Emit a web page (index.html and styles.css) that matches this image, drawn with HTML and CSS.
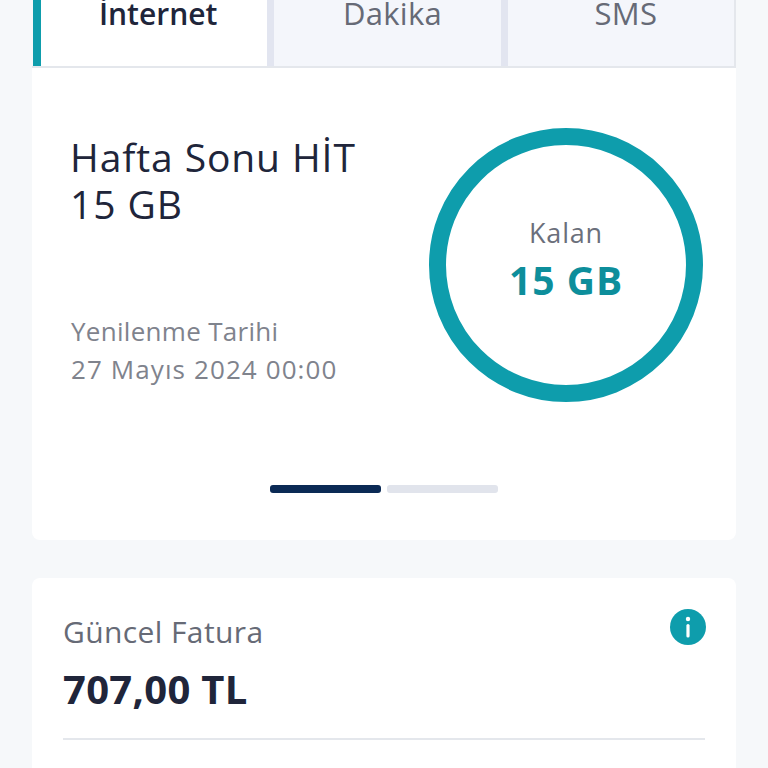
FILE: index.html
```html
<!DOCTYPE html>
<html lang="tr">
<head>
<meta charset="utf-8">
<title>Kalan Kullanım</title>
<link rel="stylesheet" href="styles.css">
</head>
<body>
	<div class="tabs">
		<div class="tab tab-active">İnternet</div>
		<div class="tab">Dakika</div>
		<div class="tab tab-last">SMS</div>
	</div>

	<div class="card usage">
		<div class="usage-row">
			<div class="usage-info">
				<div class="usage-title">Hafta Sonu HİT<br>15 GB</div>
				<div class="usage-date">
					<div class="date-label">Yenilenme Tarihi</div>
					<div class="date-value">27 Mayıs 2024 00:00</div>
				</div>
			</div>
			<div class="ring">
				<div class="ring-label">Kalan</div>
				<div class="ring-value">15 GB</div>
			</div>
		</div>
		<div class="pager">
			<span class="pager-bar pager-on"></span>
			<span class="pager-bar"></span>
		</div>
	</div>

	<div class="card bill">
		<div class="bill-head">
			<div>
				<div class="bill-label">Güncel Fatura</div>
				<div class="bill-amount">707,00 TL</div>
			</div>
			<svg class="info" viewBox="0 0 36 36" width="36" height="36">
				<circle cx="18" cy="18" r="18" fill="#0e9dac"/>
				<circle cx="18" cy="10" r="2.2" fill="#fff"/>
				<rect x="16.4" y="15" width="3.2" height="13.5" rx="1.6" fill="#fff"/>
			</svg>
		</div>
		<div class="bill-line"></div>
	</div>
</body>
</html>
```

FILE: styles.css
```css
html, body {
	height: 768px;
	overflow: hidden;
}

body {
	margin: 0;
	padding: 0 32px;
	background: #f6f8fa;
	color: #20253a;
	font-family: "Open Sans", "Lato", sans-serif;
}

/* tabs run off the top of the screen */
.tabs {
	display: flex;
	height: 86px;
	margin-top: -20px;
	border-bottom: 2px solid #e4e7ec;
	border-right: 2px solid #e4e7ec;
}

.tab {
	flex: 1;
	padding-top: 13px;
	background: #f4f6fb;
	border-right: 7px solid #e2e5f0;
	color: #666a76;
	font-size: 31px;
	letter-spacing: 0.3px;
	line-height: 40px;
	text-align: center;
	text-indent: 10px;
}

.tab-active {
	padding-top: 14px;
	background: #fff;
	border-left: 8px solid #0e9dac;
	margin-left: 1px;
	color: #20253a;
	font-size: 30px;
	font-weight: 600;
	letter-spacing: 0;
	text-indent: 8px;
}

.tab-last {
	border-right: 0;
}

.card {
	background: #fff;
}

.usage {
	height: 472px;
	border-radius: 0 0 8px 8px;
}

.usage-row {
	display: flex;
	justify-content: space-between;
	padding: 60px 33px 0 39px;
}

.usage-info {
	padding-top: 5px;
}

.usage-title {
	margin-left: -1px;
	font-size: 39px;
	font-weight: 500;
	letter-spacing: 0.9px;
	line-height: 47px;
}

.usage-date {
	margin-top: 85px;
	color: #7f838d;
	font-size: 26px;
	line-height: 38px;
}

.date-label {
	letter-spacing: 0.3px;
}

.date-value {
	letter-spacing: 1.1px;
}

.ring {
	box-sizing: border-box;
	display: flex;
	flex-direction: column;
	align-items: center;
	justify-content: center;
	width: 274px;
	height: 274px;
	padding-bottom: 12px;
	border: 17px solid #0e9dac;
	border-radius: 50%;
}

.ring-label {
	color: #6b6f7b;
	font-size: 27px;
	letter-spacing: 0.8px;
	line-height: 40px;
}

.ring-value {
	margin-top: 2px;
	color: #0d8e9b;
	font-size: 39px;
	font-weight: 700;
	letter-spacing: 1px;
	line-height: 50px;
}

.pager {
	display: flex;
	justify-content: center;
	gap: 6px;
	margin-top: 83px;
}

.pager-bar {
	width: 111px;
	height: 8px;
	border-radius: 3px;
	background: #e1e4ec;
}

.pager-on {
	background: #0b2a55;
}

.bill {
	height: 300px;
	margin-top: 38px;
	padding: 32px 31px 0;
	border-radius: 8px 8px 0 0;
}

.bill-head {
	display: flex;
	justify-content: space-between;
	align-items: flex-start;
}

.bill-label {
	color: #666a76;
	font-size: 30px;
	letter-spacing: 0.4px;
	line-height: 44px;
}

.bill-amount {
	margin-top: 12px;
	font-size: 40px;
	font-weight: 700;
	letter-spacing: 0.3px;
	line-height: 46px;
}

.info {
	margin-top: -1px;
	margin-right: -1px;
}

.bill-line {
	height: 2px;
	margin-top: 26px;
	background: #e4e7ec;
}
```
